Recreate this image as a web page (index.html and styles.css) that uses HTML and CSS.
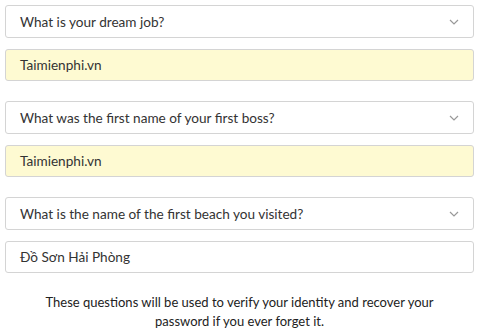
FILE: index.html
```html
<!DOCTYPE html>
<html>
<head>
<meta charset="utf-8">
<link rel="stylesheet" href="styles.css">
</head>
<body>
<div class="form">
  <div class="group">
    <div class="select"><span>What is your dream job?</span><svg class="chev" width="10" height="6" viewBox="0 0 10 6"><path d="M1 1l4 4 4-4" fill="none" stroke="#999" stroke-width="1.2"/></svg></div>
    <div class="input filled">Taimienphi.vn</div>
  </div>
  <div class="group">
    <div class="select"><span>What was the first name of your first boss?</span><svg class="chev" width="10" height="6" viewBox="0 0 10 6"><path d="M1 1l4 4 4-4" fill="none" stroke="#999" stroke-width="1.2"/></svg></div>
    <div class="input filled">Taimienphi.vn</div>
  </div>
  <div class="group">
    <div class="select"><span>What is the name of the first beach you visited?</span><svg class="chev" width="10" height="6" viewBox="0 0 10 6"><path d="M1 1l4 4 4-4" fill="none" stroke="#999" stroke-width="1.2"/></svg></div>
    <div class="input">Đồ Sơn Hải Phòng</div>
  </div>
  <p class="note">These questions will be used to verify your identity and recover your password if you ever forget it.</p>
</div>
</body>
</html>
```
FILE: styles.css
```css
html, body { margin: 0; padding: 0; background: #fff; }
body { font-family: "Lato", "Open Sans", sans-serif; color: #333; }
.form { padding: 5px 8px 0 5px; display: flex; flex-direction: column; gap: 20px; }
.group { display: flex; flex-direction: column; gap: 11px; }
.select, .input {
  box-sizing: border-box;
  border: 1px solid #d4d4d4;
  border-radius: 3px;
  padding: 0 14px;
  font-size: 13.6px;
  display: flex;
  align-items: center;
}
.select { height: 33px; justify-content: space-between; background: #fff; }
.input { height: 32px; }
.input.filled { background: #fefad2; }
.chev { margin-right: 0; }
.note { margin: 0; text-align: center; font-size: 13px; line-height: 19px; color: #222; padding: 0 20px; }
```
